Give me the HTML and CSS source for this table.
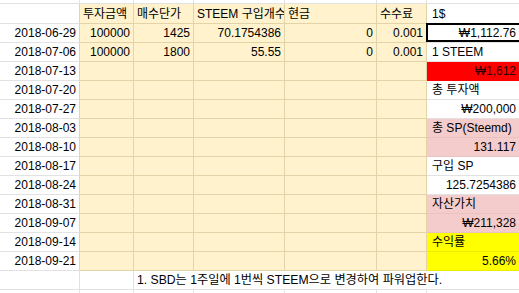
FILE: index.html
```html
<!DOCTYPE html>
<html lang="ko">
<head>
<meta charset="utf-8">
<link rel="stylesheet" href="styles.css">
</head>
<body>
<div class="sheet">
  <div class="c"></div><div class="c"></div><div class="c"></div><div class="c"></div><div class="c"></div><div class="c"></div><div class="c g"></div>

  <div class="c a"></div><div class="c y">투자금액</div><div class="c y">매수단가</div><div class="c y">STEEM 구입개수</div><div class="c y">현금</div><div class="c y">수수료</div><div class="c g">1$</div>

  <div class="c a r">2018-06-29</div><div class="c y r">100000</div><div class="c y r">1425</div><div class="c y r">70.1754386</div><div class="c y r">0</div><div class="c y r">0.001</div><div class="c g r box">₩1,112.76</div>
  <div class="c a r">2018-07-06</div><div class="c y r">100000</div><div class="c y r">1800</div><div class="c y r">55.55</div><div class="c y r">0</div><div class="c y r">0.001</div><div class="c g">1 STEEM</div>
  <div class="c a r">2018-07-13</div><div class="c y"></div><div class="c y"></div><div class="c y"></div><div class="c y"></div><div class="c y"></div><div class="c g r red">₩1,612</div>
  <div class="c a r">2018-07-20</div><div class="c y"></div><div class="c y"></div><div class="c y"></div><div class="c y"></div><div class="c y"></div><div class="c g">총 투자액</div>
  <div class="c a r">2018-07-27</div><div class="c y"></div><div class="c y"></div><div class="c y"></div><div class="c y"></div><div class="c y"></div><div class="c g r">₩200,000</div>
  <div class="c a r">2018-08-03</div><div class="c y"></div><div class="c y"></div><div class="c y"></div><div class="c y"></div><div class="c y"></div><div class="c g pk">총 SP(Steemd)</div>
  <div class="c a r">2018-08-10</div><div class="c y"></div><div class="c y"></div><div class="c y"></div><div class="c y"></div><div class="c y"></div><div class="c g r pk">131.117</div>
  <div class="c a r">2018-08-17</div><div class="c y"></div><div class="c y"></div><div class="c y"></div><div class="c y"></div><div class="c y"></div><div class="c g">구입 SP</div>
  <div class="c a r">2018-08-24</div><div class="c y"></div><div class="c y"></div><div class="c y"></div><div class="c y"></div><div class="c y"></div><div class="c g r">125.7254386</div>
  <div class="c a r">2018-08-31</div><div class="c y"></div><div class="c y"></div><div class="c y"></div><div class="c y"></div><div class="c y"></div><div class="c g pk">자산가치</div>
  <div class="c a r">2018-09-07</div><div class="c y"></div><div class="c y"></div><div class="c y"></div><div class="c y"></div><div class="c y"></div><div class="c g r pk">₩211,328</div>
  <div class="c a r">2018-09-14</div><div class="c y"></div><div class="c y"></div><div class="c y"></div><div class="c y"></div><div class="c y"></div><div class="c g yl">수익률</div>
  <div class="c a r">2018-09-21</div><div class="c y"></div><div class="c y"></div><div class="c y"></div><div class="c y"></div><div class="c y"></div><div class="c g r yl">5.66%</div>

  <div class="c"></div><div class="c"></div><div class="c note">1. SBD는 1주일에 1번씩 STEEM으로 변경하여 파워업한다.</div>

  <div class="c"></div><div class="c"></div><div class="c"></div><div class="c"></div><div class="c"></div><div class="c"></div><div class="c g"></div>
</div>
</body>
</html>
```

FILE: styles.css
```css
html, body {
  margin: 0;
  padding: 0;
  background: #ffffff;
  overflow: hidden;
}

.sheet {
  display: grid;
  grid-template-columns: 80px 54px 60px 91px 92px 50px 93px;
  grid-template-rows: 4px 20px repeat(13, 19px) 19px 4px;
  width: 519px;
  height: 293px;
  overflow: hidden;
  font-family: "Liberation Sans", "Noto Sans CJK KR", sans-serif;
  font-size: 12px;
  line-height: 14px;
  color: #000000;
}

.c {
  box-sizing: border-box;
  display: flex;
  align-items: flex-end;
  justify-content: flex-start;
  padding: 0 3px 2px;
  border-right: 1px solid #e2e2e2;
  border-bottom: 1px solid #e2e2e2;
  background: #ffffff;
  white-space: nowrap;
  overflow: hidden;
  position: relative;
}

.a {
  border-right-color: #ddd4bc;
}

.y {
  background: #fff2cc;
  border-right-color: #e2d3a8;
  border-bottom-color: #e2d3a8;
}

.r {
  justify-content: flex-end;
}

.g {
  border-right: none;
  padding-right: 4px;
  padding-left: 5px;
}

.red {
  background: #ff0000;
  color: #2a0000;
  border-bottom-color: #ff0000;
}

.pk {
  background: #f4cccc;
  border-bottom-color: #e9c2c2;
}

.yl {
  background: #ffff00;
  border-bottom-color: #ecec00;
}

.box {
  overflow: visible;
}

.box::after {
  content: "";
  position: absolute;
  top: -1px;
  left: -1px;
  right: -1px;
  bottom: 0;
  border: 2px solid #000000;
  box-sizing: border-box;
}

.note {
  grid-column: 3 / 8;
  border-right: none;
  overflow: visible;
  font-size: 12.2px;
}
```
